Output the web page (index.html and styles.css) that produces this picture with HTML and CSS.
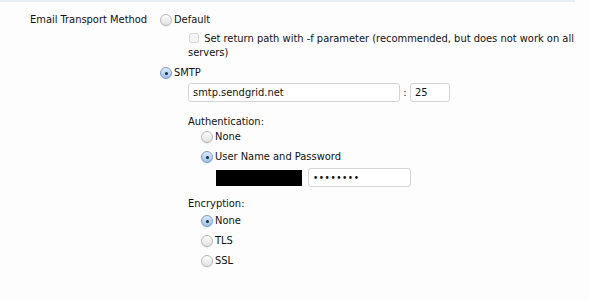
FILE: index.html
```html
<!DOCTYPE html>
<html lang="en">
<head>
    <meta charset="UTF-8">
    <title>Email Options</title>
    <link rel="stylesheet" href="styles.css">
</head>
<body>

<div class="topline"></div>

<div class="option-row">
    <div class="option-label">Email Transport Method</div>
    <div class="option-body">
        <div class="radio-line">
            <span class="radio"></span><span>Default</span>
        </div>
        <div class="check-line">
            <span class="checkbox"></span>
            Set return path with -f parameter (recommended, but does not work on all servers)
        </div>

        <div class="radio-line smtp">
            <span class="radio checked"></span><span>SMTP</span>
        </div>
        <div class="sub">
            <div class="host-row">
                <div class="input host">smtp.sendgrid.net</div>
                <span class="colon">:</span>
                <div class="input port">25</div>
            </div>

            <div class="sub-title auth-title">Authentication:</div>
            <div class="sub-list">
                <div class="radio-line">
                    <span class="radio"></span><span>None</span>
                </div>
                <div class="radio-line">
                    <span class="radio checked"></span><span>User Name and Password</span>
                </div>
                <div class="cred-row">
                    <div class="redacted"></div>
                    <div class="input password">&bull;&bull;&bull;&bull;&bull;&bull;&bull;&bull;</div>
                </div>
            </div>

            <div class="sub-title enc-title">Encryption:</div>
            <div class="sub-list">
                <div class="radio-line">
                    <span class="radio checked"></span><span>None</span>
                </div>
                <div class="radio-line">
                    <span class="radio"></span><span>TLS</span>
                </div>
                <div class="radio-line">
                    <span class="radio"></span><span>SSL</span>
                </div>
            </div>
        </div>
    </div>
</div>

</body>
</html>
```

FILE: styles.css
```css
body {
    margin: 0;
    background-color: #fdfdfe;
    font-family: 'DejaVu Sans Condensed', 'Liberation Sans', sans-serif;
    font-size: 11px;
    color: #111;
}
.topline {
    height: 2px;
    width: 575px;
    background-color: #e6eef8;
}
.option-row {
    display: flex;
    padding-top: 11px;
}
.option-label {
    width: 130px;
    padding-left: 30px;
    line-height: 14px;
}
.option-body {
    width: 420px;
}
.radio-line {
    display: flex;
    align-items: center;
    height: 14px;
    line-height: 14px;
    margin-bottom: 6px;
}
.radio {
    display: inline-block;
    width: 12px;
    height: 12px;
    border: 1px solid #b8b8b8;
    border-radius: 50%;
    background: linear-gradient(#fdfdfd, #e2e2e2);
    box-shadow: 0 1px 1px rgba(0, 0, 0, 0.08);
    margin-right: 2px;
    position: relative;
    box-sizing: border-box;
}
.radio.checked {
    border-color: #7d9cc4;
    background: linear-gradient(#dbe9f9, #9cc1ea);
}
.radio.checked::after {
    content: "";
    position: absolute;
    left: 3.5px;
    top: 3.5px;
    width: 3px;
    height: 3px;
    border-radius: 50%;
    background-color: #1c2a3e;
}
.check-line {
    margin-left: 28px;
    line-height: 14px;
    text-indent: 13px;
    margin-bottom: 6px;
    margin-top: -1px;
}
.checkbox {
    display: inline-block;
    width: 10px;
    height: 10px;
    border: 1px solid #d8d8d8;
    border-radius: 2px;
    background: #f4f4f4;
    box-sizing: border-box;
    margin-left: -12px;
    margin-right: 2px;
    vertical-align: -1px;
}
.smtp {
    margin-bottom: 3px;
}
.sub {
    padding-left: 28px;
}
.host-row {
    display: flex;
    align-items: center;
}
.input {
    box-sizing: border-box;
    height: 19px;
    line-height: 17px;
    border: 1px solid #d4d4d4;
    border-radius: 3px;
    background-color: #fff;
    padding-left: 4px;
}
.host {
    width: 212px;
}
.colon {
    width: 10px;
    text-align: center;
}
.port {
    width: 40px;
}
.sub-title {
    line-height: 14px;
}
.auth-title {
    margin-top: 13px;
    margin-bottom: 1px;
}
.enc-title {
    margin-top: 10px;
    margin-bottom: 3px;
}
.sub-list {
    padding-left: 13px;
}
.sub-list .radio-line {
    margin-bottom: 6px;
}
.cred-row {
    display: flex;
    align-items: center;
    padding-left: 15px;
    margin-top: -2px;
}
.redacted {
    width: 86px;
    height: 16px;
    background-color: #000;
    margin-right: 6px;
}
.password {
    width: 103px;
    font-size: 10px;
    letter-spacing: 0.5px;
}
```
